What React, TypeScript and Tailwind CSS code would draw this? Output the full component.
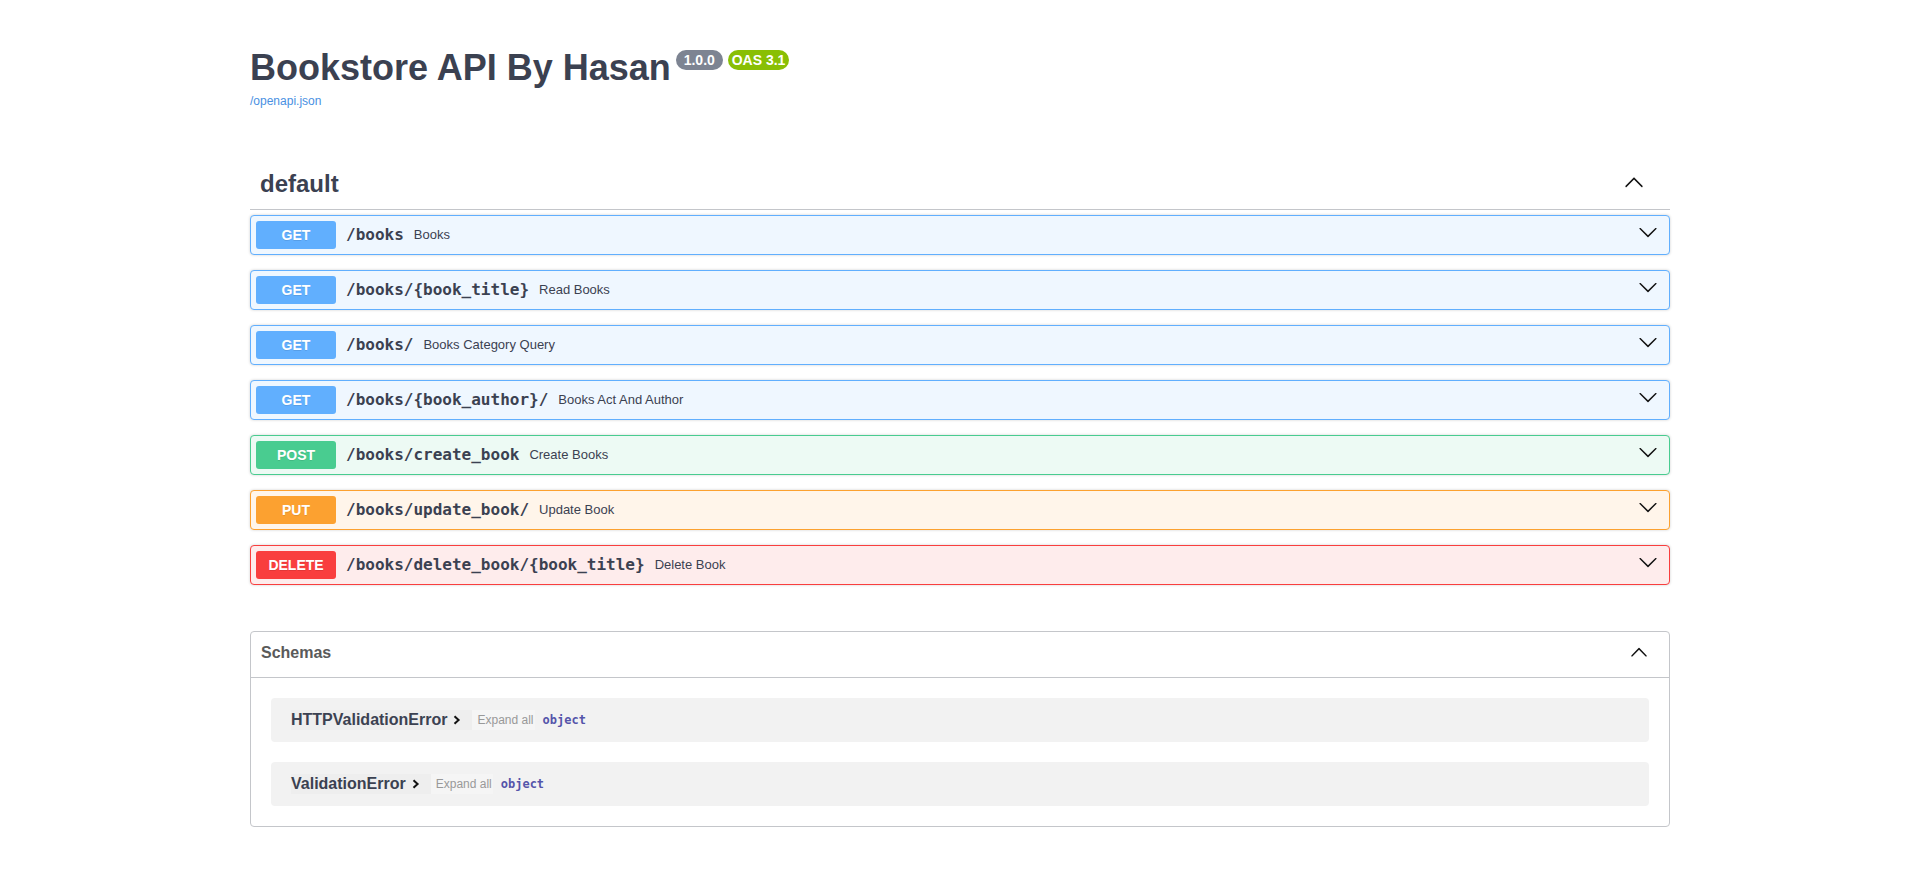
import React from 'react';

type Method = 'GET' | 'POST' | 'PUT' | 'DELETE';

interface Operation {
  method: Method;
  path: string;
  summary: string;
}

const OPERATIONS: Operation[] = [
  { method: 'GET', path: '/books', summary: 'Books' },
  { method: 'GET', path: '/books/{book_title}', summary: 'Read Books' },
  { method: 'GET', path: '/books/', summary: 'Books Category Query' },
  { method: 'GET', path: '/books/{book_author}/', summary: 'Books Act And Author' },
  { method: 'POST', path: '/books/create_book', summary: 'Create Books' },
  { method: 'PUT', path: '/books/update_book/', summary: 'Update Book' },
  { method: 'DELETE', path: '/books/delete_book/{book_title}', summary: 'Delete Book' },
];

const METHOD_STYLES: Record<Method, { block: string; badge: string }> = {
  GET: { block: 'border-[#61affe] bg-[#eff7ff]', badge: 'bg-[#61affe]' },
  POST: { block: 'border-[#49cc90] bg-[#edfaf4]', badge: 'bg-[#49cc90]' },
  PUT: { block: 'border-[#fca130] bg-[#fff5ea]', badge: 'bg-[#fca130]' },
  DELETE: { block: 'border-[#f93e3e] bg-[#feecec]', badge: 'bg-[#f93e3e]' },
};

const SCHEMAS = ['HTTPValidationError', 'ValidationError'];

const ArrowUp = ({ size = 20 }: { size?: number }) => (
  <svg width={size} height={size} viewBox="0 0 20 20" className="shrink-0">
    <path
      fill="#111"
      d="M17.418 14.908c.287.296.75.296 1.037 0 .287-.297.287-.778 0-1.074l-7.927-8.2a.711.711 0 0 0-1.036 0l-7.927 8.2c-.287.296-.287.777 0 1.074.286.296.75.296 1.036 0l7.41-7.361 7.407 7.361z"
    />
  </svg>
);

const ArrowDown = () => (
  <svg width="20" height="20" viewBox="0 0 20 20" className="shrink-0">
    <path
      fill="#111"
      d="M17.418 6.109c.272-.268.709-.268.979 0s.271.701 0 .969l-7.908 7.83a.697.697 0 0 1-.979 0l-7.908-7.83c-.27-.268-.27-.701 0-.969.271-.268.709-.268.979 0L10 13.25l7.418-7.141z"
    />
  </svg>
);

const ChevronRight = () => (
  <svg width="8" height="10" viewBox="0 0 8 10" className="shrink-0">
    <path d="M1.5 1.2 L5.6 5 L1.5 8.8" fill="none" stroke="#111" strokeWidth="2" />
  </svg>
);

const OpBlock = ({ op }: { op: Operation }) => {
  const style = METHOD_STYLES[op.method];
  return (
    <div
      className={`mb-[15px] flex h-[40px] items-center rounded-[4px] border px-[5px] shadow-[0_0_3px_rgba(0,0,0,0.19)] ${style.block}`}
    >
      <span
        className={`w-[80px] shrink-0 rounded-[3px] py-[6px] text-center text-[14px] leading-[16px] font-bold text-white [text-shadow:0_1px_0_rgba(0,0,0,0.1)] ${style.badge}`}
      >
        {op.method}
      </span>
      <span className="px-[10px] font-['DejaVu_Sans_Mono',monospace] text-[16px] font-bold text-[#3b4151]">
        {op.path}
      </span>
      <span className="flex-1 text-[13px] text-[#3b4151]">{op.summary}</span>
      <span className="mr-[6px] mb-[6px]">
        <ArrowDown />
      </span>
    </div>
  );
};

export default function App() {
  return (
    <div className="min-h-screen bg-white font-['Liberation_Sans',Arial,sans-serif] text-[#3b4151]">
      <div className="mx-auto max-w-[1460px] px-5 pt-[47px] pb-10">
        {/* info */}
        <div className="flex items-start">
          <h2 className="text-[36px] leading-[42px] font-bold text-[#3b4151]">Bookstore API By Hasan</h2>
          <span className="mt-[3px] ml-[5px] rounded-full bg-[#7d8492] px-[4px] py-[2px] text-[14px] leading-[16px] font-bold whitespace-pre text-white">
            {' 1.0.0 '}
          </span>
          <span className="mt-[3px] ml-[5px] rounded-full bg-[#89bf04] px-[4px] py-[2px] text-[14px] leading-[16px] font-bold text-white">
            OAS 3.1
          </span>
        </div>
        <a className="mt-[5px] block text-[12px] leading-[14px] text-[#4990e2]">/openapi.json</a>

        {/* default tag */}
        <div className="mt-[50px] mb-[5px] flex h-[52px] items-center border-b border-[#c4c6ca] pr-[26px] pl-[10px]">
          <h3 className="flex-1 text-[24px] font-bold text-[#3b4151]">default</h3>
          <span className="-mt-[3px]">
            <ArrowUp />
          </span>
        </div>

        <div>
          {OPERATIONS.map((op) => (
            <OpBlock key={op.method + op.path} op={op} />
          ))}
        </div>

        {/* schemas */}
        <section className="mt-[46px] rounded-[4px] border border-[#c4c6ca]">
          <div className="flex h-[46px] items-start border-b border-[#c4c6ca] pr-[21px] pl-[10px]">
            <h4 className="mt-[12px] flex-1 text-[16px] leading-[18px] font-bold text-[#5a5a5a]">Schemas</h4>
            <span className="mt-[11px]">
              <ArrowUp size={18} />
            </span>
          </div>
          <div className="flex flex-col gap-[20px] px-[20px] py-[20px]">
            {SCHEMAS.map((name) => (
              <div key={name} className="flex h-[44px] items-center rounded-[4px] bg-[#f2f2f2] pl-[20px]">
                <span className="flex h-[20px] items-center bg-[#eeeeee] pr-[11px]">
                  <span className="text-[16px] font-bold text-[#3b4151]">{name}</span>
                  <span className="ml-[6px]">
                    <ChevronRight />
                  </span>
                </span>
                <span className="flex h-[20px] items-center bg-[#f5f5f5] pr-[1px] pl-[5px] text-[12px] text-[#999]">
                  Expand all
                </span>
                <span className="ml-[8px] font-['DejaVu_Sans_Mono',monospace] text-[12px] font-bold text-[#55a]">
                  object
                </span>
              </div>
            ))}
          </div>
        </section>
      </div>
    </div>
  );
}
